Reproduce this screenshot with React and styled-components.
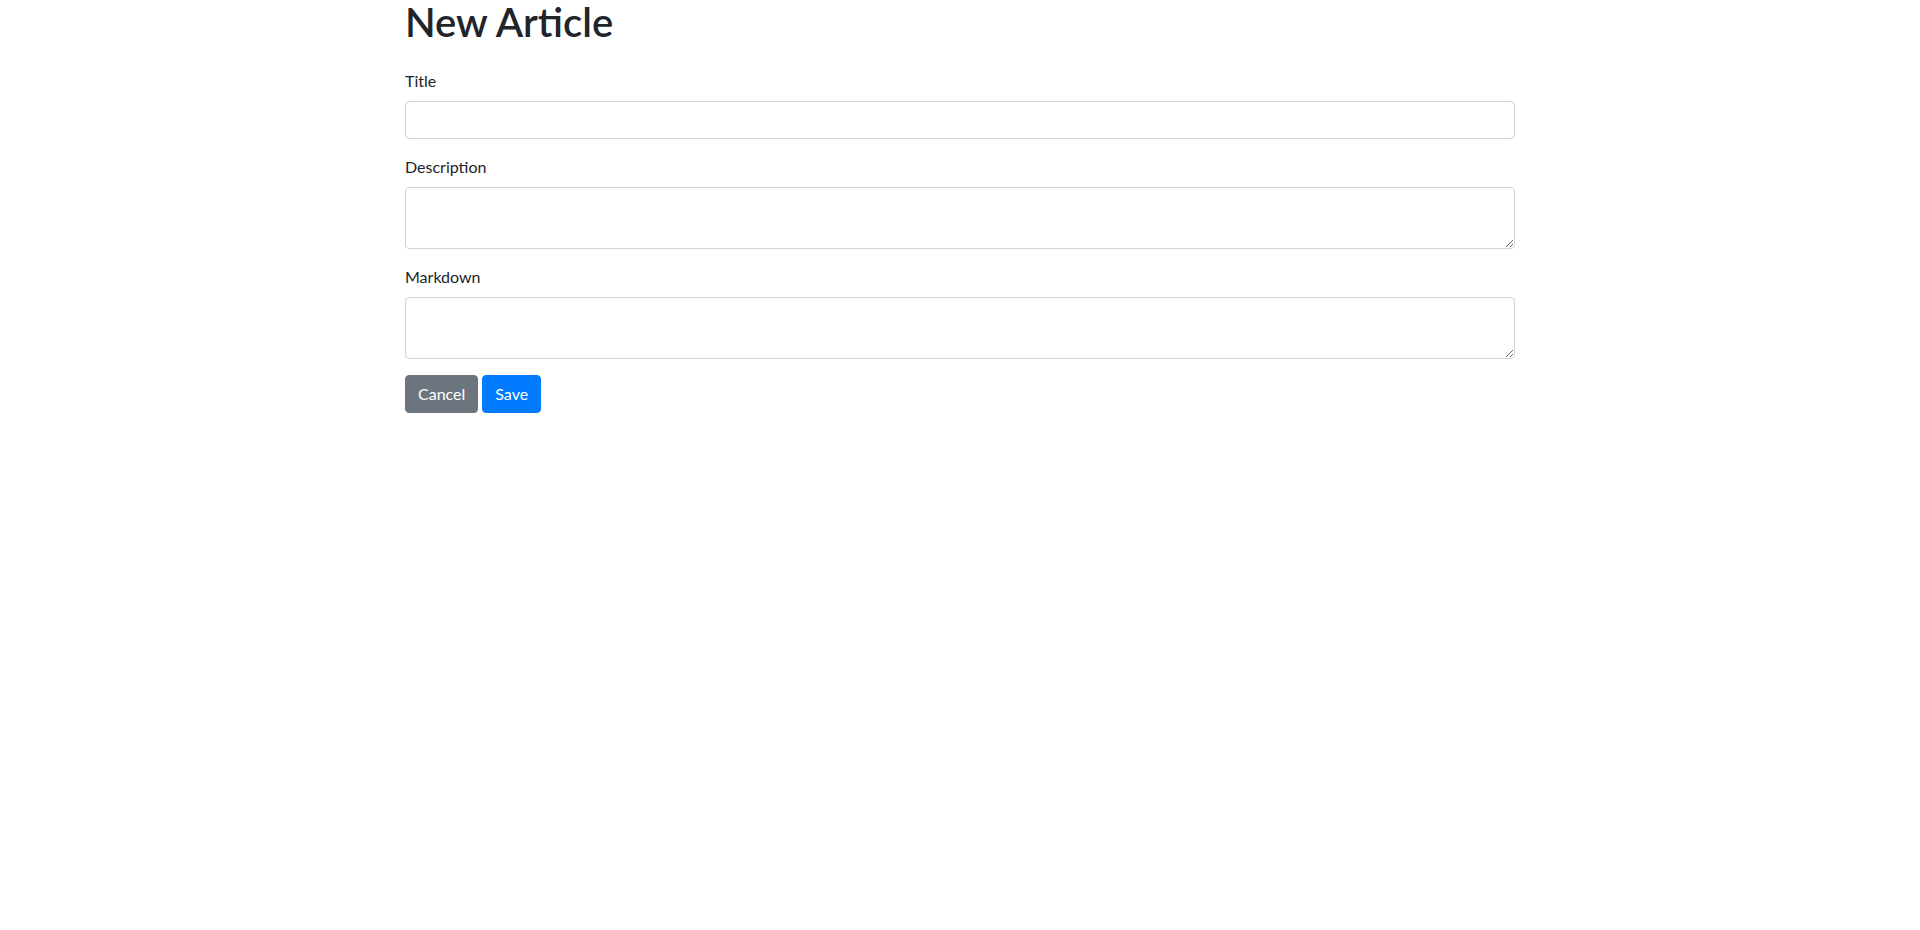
import React from "react";
import styled, { createGlobalStyle } from "styled-components";

const GlobalStyle = createGlobalStyle`
  *, *::before, *::after { box-sizing: border-box; }
  html, body { margin: 0; background: #fff; }
  body {
    font-family: Lato, "Noto Sans", sans-serif;
    font-size: 16px;
    line-height: 1.5;
    color: #212529;
  }
`;

const Container = styled.div`
  width: 100%;
  max-width: 1140px;
  margin: 0 auto;
  padding: 0 15px;
`;

const Heading = styled.h1`
  margin: -2px 0 23px;
  font-size: 40px;
  font-weight: 600;
  line-height: 1.2;
`;

const Form = styled.form`
  display: flex;
  flex-direction: column;
`;

const Group = styled.div`
  display: flex;
  flex-direction: column;
  margin-bottom: 16px;
`;

const Label = styled.label`
  display: inline-block;
  margin-bottom: 8px;
`;

const fieldStyles = `
  display: block;
  width: 100%;
  padding: 6px 12px;
  font-family: inherit;
  font-size: 16px;
  font-weight: 400;
  line-height: 1.5;
  color: #495057;
  background: #fff;
  border: 1px solid #ced4da;
  border-radius: 4px;
  outline: none;
`;

const Input = styled.input`
  ${fieldStyles}
  height: 38px;
`;

const TextArea = styled.textarea`
  ${fieldStyles}
  height: 62px;
  resize: vertical;
`;

const Actions = styled.div`
  display: flex;
  gap: 4px;
`;

const Button = styled.button`
  display: inline-block;
  padding: 6px 12px;
  font-family: inherit;
  font-size: 16px;
  line-height: 1.5;
  font-weight: 400;
  color: #fff;
  background: ${(p) => (p.$variant === "primary" ? "#007bff" : "#6c757d")};
  border: 1px solid ${(p) => (p.$variant === "primary" ? "#007bff" : "#6c757d")};
  border-radius: 4px;
  cursor: pointer;
`;

export default function App() {
  return (
    <>
      <GlobalStyle />
      <Container>
        <Heading>New Article</Heading>
        <Form onSubmit={(e) => e.preventDefault()}>
          <Group>
            <Label htmlFor="title">Title</Label>
            <Input id="title" type="text" />
          </Group>
          <Group>
            <Label htmlFor="description">Description</Label>
            <TextArea id="description" rows={2} />
          </Group>
          <Group>
            <Label htmlFor="markdown">Markdown</Label>
            <TextArea id="markdown" rows={2} />
          </Group>
          <Actions>
            <Button type="button" $variant="secondary">Cancel</Button>
            <Button type="submit" $variant="primary">Save</Button>
          </Actions>
        </Form>
      </Container>
    </>
  );
}
